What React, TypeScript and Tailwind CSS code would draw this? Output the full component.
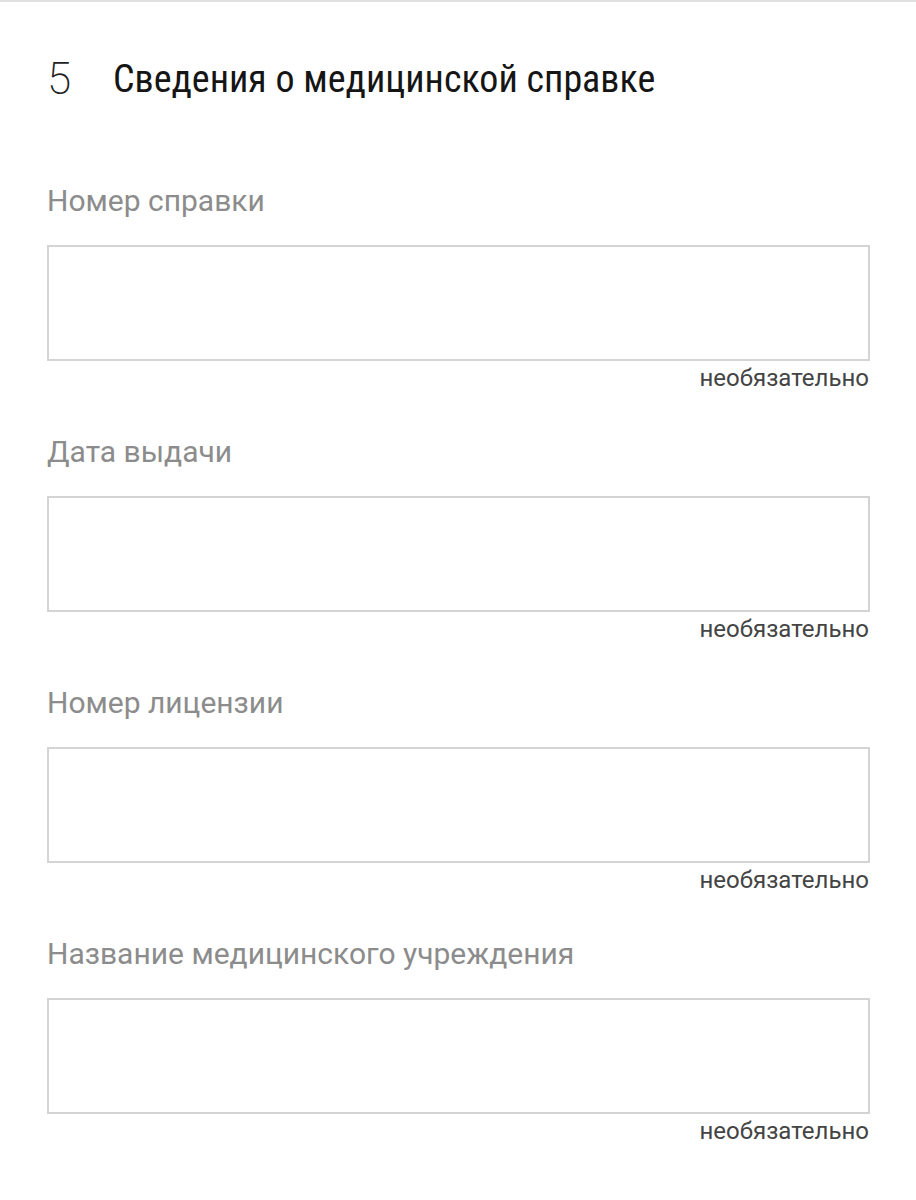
const fields = [
  'Номер справки',
  'Дата выдачи',
  'Номер лицензии',
  'Название медицинского учреждения',
];

const App = () => {
  return (
    <div className="min-h-[1200px] w-[916px] bg-white font-['Roboto',sans-serif]">
      <div className="h-[2px] bg-[#dfe1e0]" />
      <section className="flex flex-col px-[47px] pt-[55px]">
        <div className="flex items-center gap-[38px]">
          <span className="w-[28px] text-[44px] font-extralight leading-none text-[#222]">
            5
          </span>
          <h2 className="text-[38px] font-normal leading-none text-[#151515] [font-stretch:condensed]">
            Сведения о медицинской справке
          </h2>
        </div>
        <div className="mt-[82px] flex flex-col gap-[42px]">
          {fields.map((label) => (
            <div key={label} className="flex flex-col">
              <label className="text-[30px] leading-[36px] text-[#8c8c8c]">
                {label}
              </label>
              <div className="mt-[26px] h-[116px] w-[823px] border-2 border-[#d4d4d4] bg-white" />
              <p className="mt-[3px] self-end text-[24px] leading-[28px] text-[#444]">
                необязательно
              </p>
            </div>
          ))}
        </div>
      </section>
    </div>
  );
};

export default App;
